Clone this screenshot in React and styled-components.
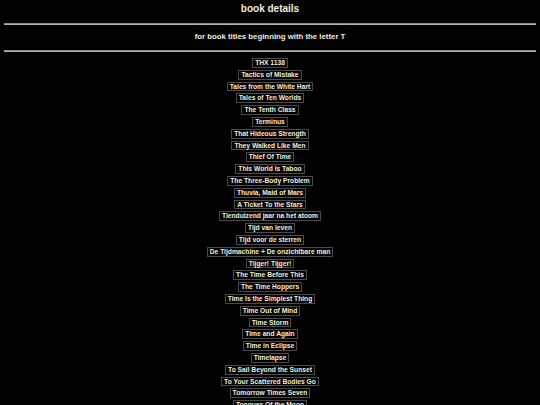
import React from "react";
import styled, { createGlobalStyle } from "styled-components";

const GlobalStyle = createGlobalStyle`
	html, body {
		margin: 0;
		padding: 0;
		background: #000;
	}
	body {
		font-family: "Liberation Sans", Arial, sans-serif;
		color: #f3eedb;
		-webkit-font-smoothing: antialiased;
	}
`;

const titles = [
	"THX 1138",
	"Tactics of Mistake",
	"Tales from the White Hart",
	"Tales of Ten Worlds",
	"The Tenth Class",
	"Terminus",
	"That Hideous Strength",
	"They Walked Like Men",
	"Thief Of Time",
	"This World Is Taboo",
	"The Three-Body Problem",
	"Thuvia, Maid of Mars",
	"A Ticket To the Stars",
	"Tienduizend jaar na het atoom",
	"Tijd van leven",
	"Tijd voor de sterren",
	"De Tijdmachine + De onzichtbare man",
	"Tijger! Tijger!",
	"The Time Before This",
	"The Time Hoppers",
	"Time Is the Simplest Thing",
	"Time Out of Mind",
	"Time Storm",
	"Time and Again",
	"Time in Eclipse",
	"Timelapse",
	"To Sail Beyond the Sunset",
	"To Your Scattered Bodies Go",
	"Tomorrow Times Seven",
	"Tongues Of the Moon",
	"Top Secret",
	"Tower of Glass",
];

export default function App() {
	return (
		<Page>
			<GlobalStyle />
			<Title>book details</Title>
			<Rule />
			<Subtitle>for book titles beginning with the letter T</Subtitle>
			<Rule />
			<BookList>
				{titles.map((t) => (
					<BookItem key={t}>{t}</BookItem>
				))}
			</BookList>
		</Page>
	);
}

const Page = styled.div`
	padding: 0 4px;
`;

const Title = styled.h1`
	margin: 3px 0 0;
	font-size: 10px;
	line-height: 12px;
	font-weight: 700;
	text-align: center;
`;

const Rule = styled.hr`
	margin: 8px 0 0;
	height: 0;
	border: none;
	border-top: 1px solid #8a8a8a;
	border-bottom: 1px solid #b0b0b0;
`;

const Subtitle = styled.h3`
	margin: 7px 0 0;
	font-size: 7.8px;
	line-height: 10px;
	font-weight: 700;
	text-align: center;
`;

const BookList = styled.div`
	margin-top: 6px;
	display: flex;
	flex-direction: column;
	align-items: center;
	gap: 2px;
`;

const BookItem = styled.div`
	border: 1px solid #4a4a4a;
	padding: 0 2px;
	font-size: 6.7px;
	line-height: 7.8px;
	font-weight: 700;
	white-space: nowrap;
`;
